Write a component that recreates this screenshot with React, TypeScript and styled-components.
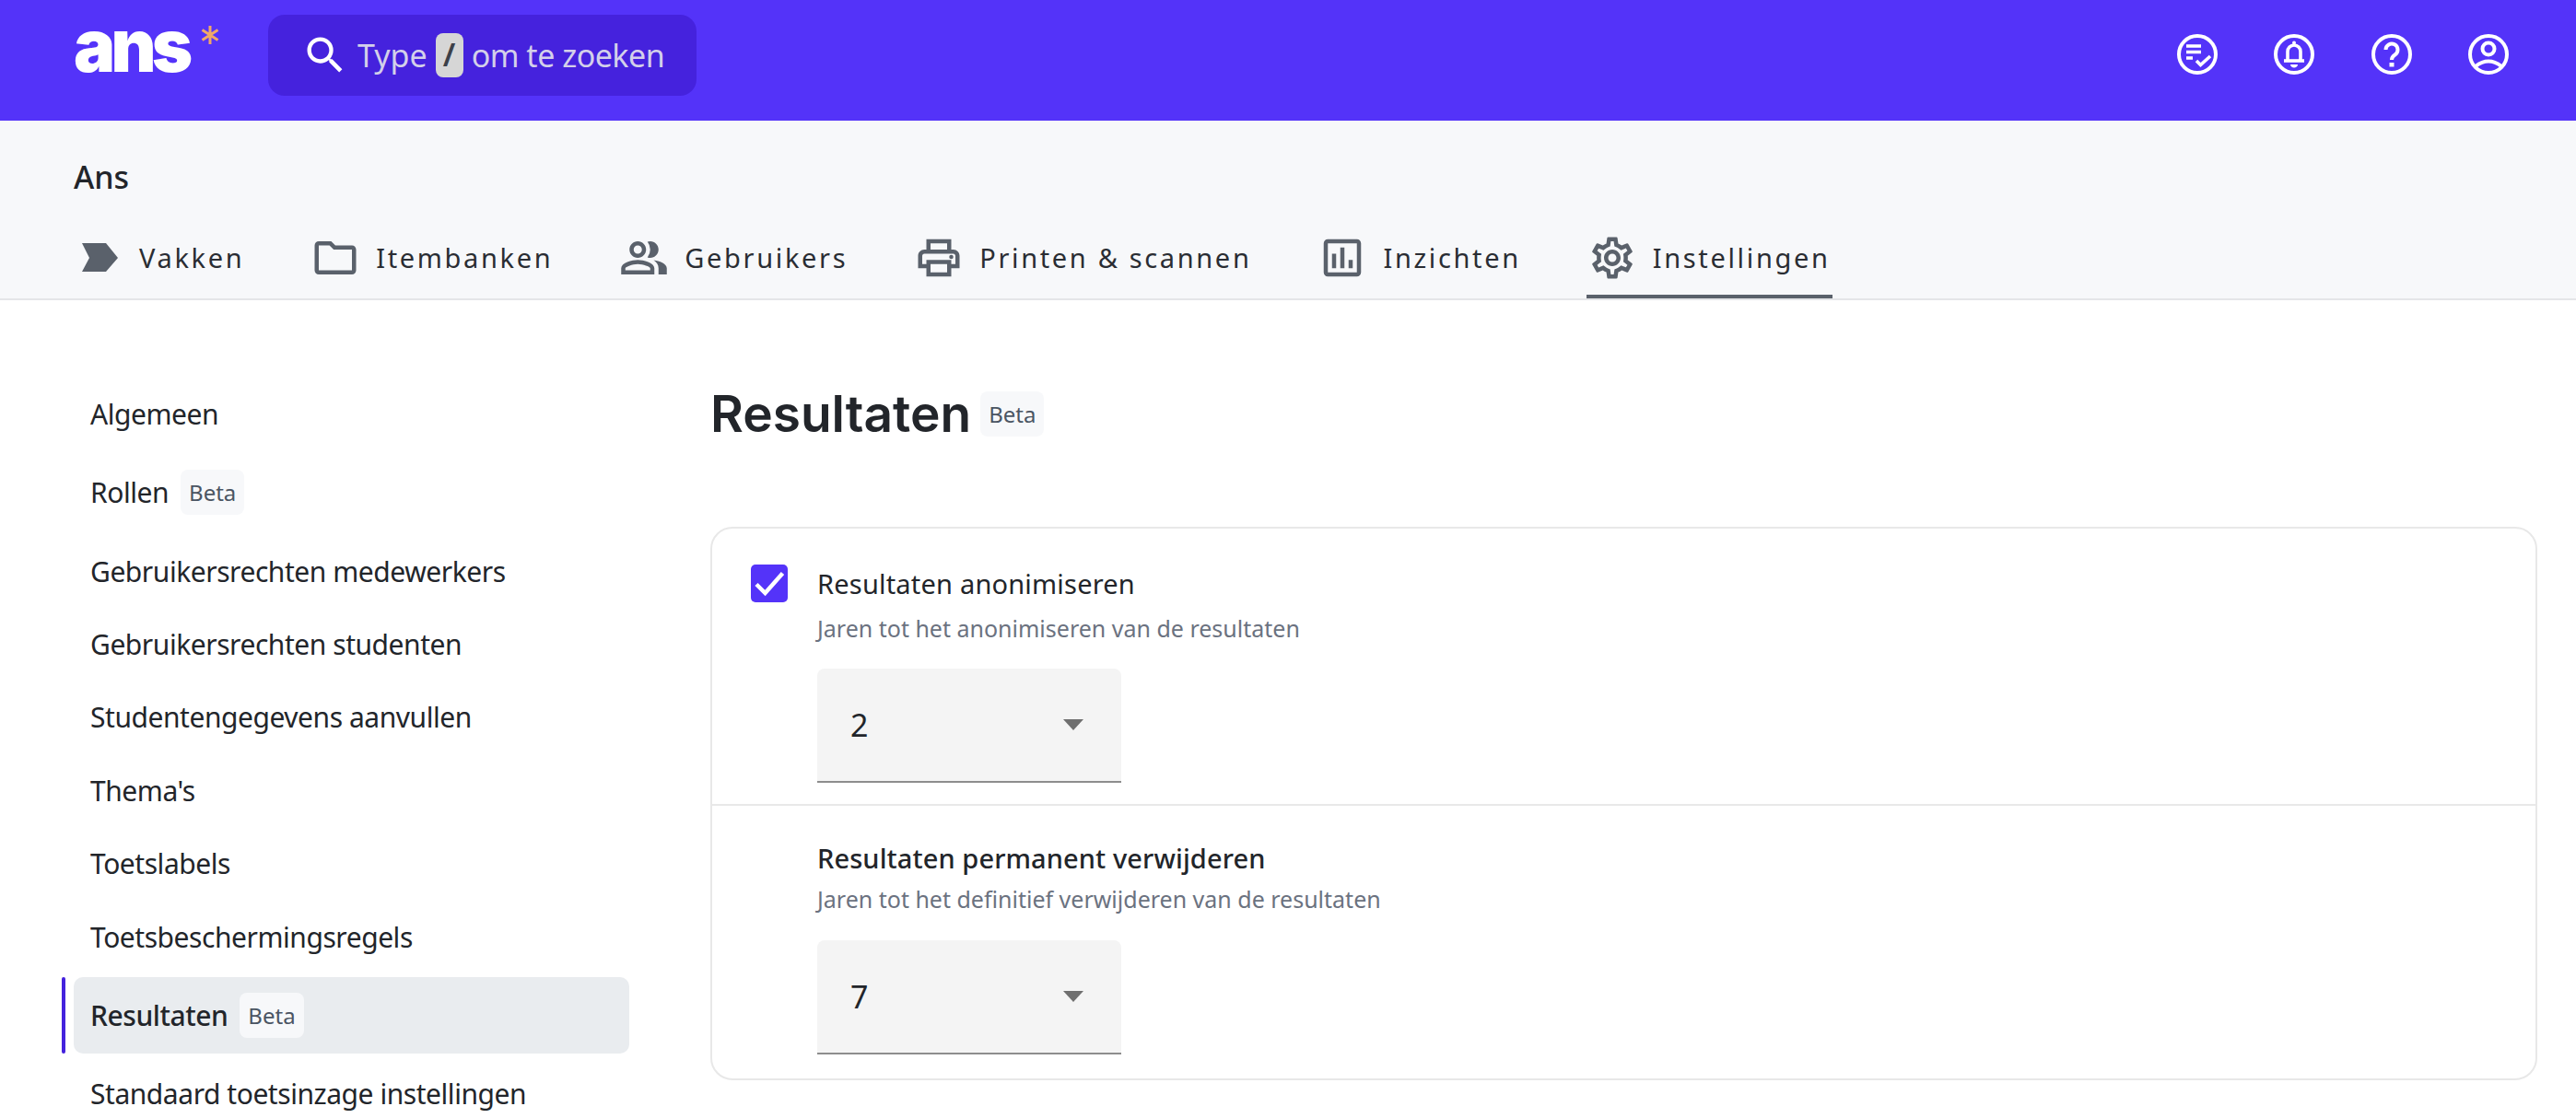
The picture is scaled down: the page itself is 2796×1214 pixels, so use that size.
import styled, { createGlobalStyle } from "styled-components";
import {
  MdSearch,
  MdOutlineFolder,
  MdOutlinePeopleAlt,
  MdOutlinePrint,
  MdOutlineAssessment,
  MdOutlineSettings,
} from "react-icons/md";

const GlobalStyle = createGlobalStyle`
  html, body {
    margin: 0;
    height: 100%;
    overflow: hidden;
    background: #ffffff;
    color: #22252a;
    font-family: "Noto Sans", sans-serif;
  }
  * {
    box-sizing: border-box;
  }
`;

const sideItems = [
  { label: "Algemeen" },
  { label: "Rollen", beta: true },
  { label: "Gebruikersrechten medewerkers" },
  { label: "Gebruikersrechten studenten" },
  { label: "Studentengegevens aanvullen" },
  { label: "Thema's" },
  { label: "Toetslabels" },
  { label: "Toetsbeschermingsregels" },
  { label: "Resultaten", beta: true, active: true },
  { label: "Standaard toetsinzage instellingen" },
];

function ChevronIcon() {
  return (
    <svg width="39" height="31" viewBox="0 0 39 31" fill="#5a616b">
      <path d="M0 0H26L39 16 26 31H0L8 16Z" />
    </svg>
  );
}

function StarIcon() {
  return (
    <svg width="20" height="20" viewBox="0 0 20 20" fill="none" stroke="#f0a868" strokeWidth="3">
      <path d="M10 0V20M1.5 4.5L18.5 15.5M18.5 4.5L1.5 15.5" />
    </svg>
  );
}

function CheckIcon() {
  return (
    <svg width="40" height="41" viewBox="0 0 40 41" fill="none" stroke="#fff" strokeWidth="4.5">
      <path d="M6 21.5L15.5 31 34.5 9.5" />
    </svg>
  );
}

function TaskIcon() {
  return (
    <svg width="44" height="44" viewBox="0 0 44 44" fill="none" stroke="#fff" strokeWidth="4">
      <circle cx="22" cy="22" r="20" />
      <path d="M10 13H26M10 19.5H26M10 26H17" strokeWidth="3.6" />
      <path d="M21 29L25.5 33.5 36 24" strokeWidth="3.6" />
    </svg>
  );
}

function BellIcon() {
  return (
    <svg width="44" height="44" viewBox="0 0 44 44" fill="none" stroke="#fff" strokeWidth="4">
      <circle cx="22" cy="22" r="20" />
      <path d="M15 29V19a7 7 0 0 1 14 0V29" strokeWidth="3.6" />
      <path d="M11 29H33" strokeWidth="3.6" />
      <circle cx="22" cy="9.5" r="2" fill="#fff" stroke="none" />
      <path d="M18 33H26C26 35 24 36.5 22 36.5S18 35 18 33Z" fill="#fff" stroke="none" />
    </svg>
  );
}

function HelpIcon() {
  return (
    <svg width="44" height="44" viewBox="0 0 44 44" fill="none" stroke="#fff" strokeWidth="4">
      <circle cx="22" cy="22" r="20" />
      <path d="M15.5 17a6.5 6.5 0 1 1 10 5.5c-2.5 1.6-3.5 3-3.5 5.5" />
      <path d="M19.5 31H24.5V35.5H19.5Z" fill="#fff" stroke="none" />
    </svg>
  );
}

function UserIcon() {
  return (
    <svg width="44" height="44" viewBox="0 0 44 44" fill="none" stroke="#fff" strokeWidth="4">
      <circle cx="22" cy="22" r="20" />
      <circle cx="22" cy="16" r="6.5" />
      <path d="M8 35Q22 24 36 35" />
    </svg>
  );
}

function Logo() {
  return (
    <LogoWrap>
      <LogoText>ans</LogoText>
      <LogoStar>
        <StarIcon />
      </LogoStar>
    </LogoWrap>
  );
}

function SelectBox({ value }: { value: string }) {
  return (
    <Select>
      <SelectValue>{value}</SelectValue>
      <SelectArrow />
    </Select>
  );
}

export default function App() {
  return (
    <>
      <GlobalStyle />
      <TopBar>
        <Logo />
        <SearchBox>
          <MdSearch size={52} color="#ffffff" />
          <SearchText>Type</SearchText>
          <Kbd>/</Kbd>
          <SearchText $squeeze>om te zoeken</SearchText>
        </SearchBox>
        <TopIcons>
          <TaskIcon />
          <BellIcon />
          <HelpIcon />
          <UserIcon />
        </TopIcons>
      </TopBar>
      <SubHeader>
        <SchoolName>Ans</SchoolName>
        <Tabs>
          <Tab>
            <ChevronBox>
              <ChevronIcon />
            </ChevronBox>
            Vakken
          </Tab>
          <Tab>
            <MdOutlineFolder size={54} color="#5a616b" />
            Itembanken
          </Tab>
          <Tab>
            <MdOutlinePeopleAlt size={54} color="#5a616b" />
            Gebruikers
          </Tab>
          <Tab>
            <MdOutlinePrint size={54} color="#5a616b" />
            Printen &amp; scannen
          </Tab>
          <Tab>
            <MdOutlineAssessment size={54} color="#5a616b" />
            Inzichten
          </Tab>
          <Tab $active>
            <MdOutlineSettings size={54} color="#5a616b" />
            Instellingen
          </Tab>
        </Tabs>
      </SubHeader>
      <Page>
        <Sidebar>
          {sideItems.map((item) => (
            <SideItem key={item.label} $active={item.active} $tall={item.beta}>
              {item.label}
              {item.beta && <Badge>Beta</Badge>}
            </SideItem>
          ))}
        </Sidebar>
        <Main>
          <TitleRow>
            <Title>Resultaten</Title>
            <Badge>Beta</Badge>
          </TitleRow>
          <Card>
            <CardRow>
              <Checkbox>
                <CheckIcon />
              </Checkbox>
              <RowBody>
                <RowTitle>Resultaten anonimiseren</RowTitle>
                <RowHint>Jaren tot het anonimiseren van de resultaten</RowHint>
                <SelectBox value="2" />
              </RowBody>
            </CardRow>
            <CardRow $second>
              <CheckboxSpacer />
              <RowBody>
                <RowTitle $bold>Resultaten permanent verwijderen</RowTitle>
                <RowHint $close>Jaren tot het definitief verwijderen van de resultaten</RowHint>
                <SelectBox value="7" />
              </RowBody>
            </CardRow>
          </Card>
        </Main>
      </Page>
    </>
  );
}

const TopBar = styled.header`
  height: 131px;
  background: #5433f9;
  display: flex;
  align-items: flex-start;
  padding: 16px 73px 0 80px;
`;

const LogoWrap = styled.div`
  width: 211px;
  height: 88px;
  display: flex;
  align-items: flex-start;
`;

const LogoText = styled.span`
  display: block;
  width: 138px;
  font-family: "Inter", sans-serif;
  font-weight: 900;
  font-size: 80px;
  line-height: 80px;
  letter-spacing: -5px;
  color: #ffffff;
  margin-top: -7px;
  transform: scaleX(0.945);
  transform-origin: left center;
`;

const LogoStar = styled.span`
  display: flex;
  margin-top: 12px;
`;

const SearchBox = styled.div`
  width: 465px;
  height: 88px;
  background: #4522dd;
  border-radius: 18px;
  display: flex;
  align-items: center;
  padding-left: 36px;
  gap: 9px;
`;

const SearchText = styled.span<{ $squeeze?: boolean }>`
  font-size: 34px;
  color: #d3d0ea;
  letter-spacing: ${(props) => (props.$squeeze ? "-0.5px" : "0")};
`;

const Kbd = styled.span`
  width: 30px;
  height: 48px;
  border-radius: 8px;
  background: #d6d6d6;
  color: #3c4048;
  font-size: 34px;
  font-weight: 600;
  line-height: 46px;
  text-align: center;
`;

const TopIcons = styled.div`
  margin-left: auto;
  display: flex;
  gap: 61.5px;
  padding-top: 21px;
`;

const SubHeader = styled.div`
  height: 195px;
  background: #f7f8fa;
  border-bottom: 2px solid #e4e5e8;
  padding: 0 0 0 80px;
  display: flex;
  flex-direction: column;
`;

const SchoolName = styled.div`
  font-size: 34px;
  font-weight: 500;
  line-height: 46px;
  margin-top: 38px;
`;

const Tabs = styled.nav`
  display: flex;
  align-items: stretch;
  gap: 69px;
  margin-top: auto;
  height: 90px;
`;

const Tab = styled.div<{ $active?: boolean }>`
  display: flex;
  align-items: center;
  gap: 17px;
  height: 100%;
  padding: 5px 2px 0 1px;
  font-size: 29px;
  letter-spacing: 2.65px;
  color: #2a2d33;
  border-bottom: 4px solid ${(props) => (props.$active ? "#5a616b" : "transparent")};
`;

const ChevronBox = styled.span`
  display: flex;
  margin-left: 8px;
  margin-right: 6px;
`;

const Page = styled.div`
  display: flex;
  align-items: flex-start;
  padding: 84px 42px 0 80px;
`;

const Sidebar = styled.aside`
  width: 603px;
  flex-shrink: 0;
  display: flex;
  flex-direction: column;
`;

const SideItem = styled.div<{ $active?: boolean; $tall?: boolean }>`
  position: relative;
  height: ${(props) => (props.$tall ? "83px" : "71.4px")};
  margin: 4px 0;
  padding-left: 18px;
  display: flex;
  align-items: center;
  gap: 13px;
  border-radius: 10px;
  font-size: 30px;
  letter-spacing: -0.45px;
  font-weight: ${(props) => (props.$active ? 500 : 400)};
  background: ${(props) => (props.$active ? "#e9ecef" : "transparent")};

  &::before {
    content: "";
    display: ${(props) => (props.$active ? "block" : "none")};
    position: absolute;
    left: -13px;
    top: 0;
    bottom: 0;
    width: 4px;
    border-radius: 2px;
    background: #4422dd;
  }
`;

const Badge = styled.span`
  height: 49px;
  padding: 0 9px;
  display: flex;
  align-items: center;
  border-radius: 8px;
  background: #f7f8fa;
  color: #4b5563;
  font-size: 24px;
  font-weight: 400;
  letter-spacing: 0;
`;

const Main = styled.main`
  flex: 1;
  margin-left: 88px;
`;

const TitleRow = styled.div`
  display: flex;
  align-items: center;
  gap: 10px;
  height: 78px;
  margin-bottom: 84px;
`;

const Title = styled.h1`
  margin: 0;
  font-family: "Inter", sans-serif;
  font-size: 55px;
  font-weight: 600;
  color: #22252a;
`;

const Card = styled.section`
  border: 2px solid #e8e8e8;
  border-radius: 24px;
  height: 601px;
`;

const CardRow = styled.div<{ $second?: boolean }>`
  display: flex;
  gap: 31px;
  padding: ${(props) => (props.$second ? "36px 42px 0" : "39px 42px 23px")};
  border-top: ${(props) => (props.$second ? "2px solid #e8e8e8" : "none")};
`;

const Checkbox = styled.div`
  width: 40px;
  height: 41px;
  margin-right: 1px;
  border-radius: 5px;
  background: #5433f9;
  display: flex;
  align-items: center;
  justify-content: center;
`;

const CheckboxSpacer = styled.div`
  width: 41px;
`;

const RowBody = styled.div`
  display: flex;
  flex-direction: column;
`;

const RowTitle = styled.div<{ $bold?: boolean }>`
  font-size: 29px;
  font-weight: ${(props) => (props.$bold ? 500 : 400)};
  letter-spacing: ${(props) => (props.$bold ? "0.1px" : "0.2px")};
  line-height: 41px;
`;

const RowHint = styled.div<{ $close?: boolean }>`
  font-size: 25px;
  line-height: 34px;
  margin-top: ${(props) => (props.$close ? "7px" : "11px")};
  margin-bottom: ${(props) => (props.$close ? "0.5px" : "0")};
  color: #6b7280;
`;

const Select = styled.div`
  width: 330px;
  height: 124px;
  margin-top: 27px;
  padding: 0 41px 0 36px;
  display: flex;
  align-items: center;
  justify-content: space-between;
  background: #f4f4f4;
  border-bottom: 2px solid #8d8d8d;
  border-radius: 8px 8px 0 0;
`;

const SelectValue = styled.span`
  font-size: 34px;
  color: #22252a;
`;

const SelectArrow = styled.span`
  border-left: 11px solid transparent;
  border-right: 11px solid transparent;
  border-top: 12px solid #6f6f6f;
`;
